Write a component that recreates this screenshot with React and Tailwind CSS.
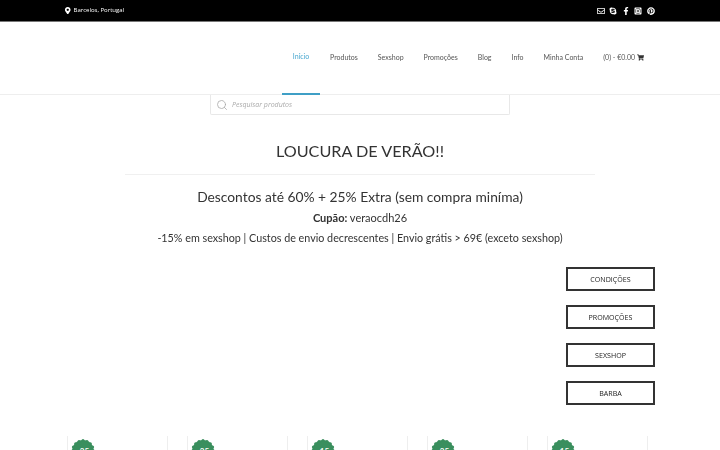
import React from "react";
import { FaMapMarkerAlt, FaRegEnvelope, FaSkype, FaFacebookF, FaInstagramSquare, FaPinterest, FaShoppingCart } from "react-icons/fa";
import { Search } from "lucide-react";

const links = ["Produtos", "Sexshop", "Promoções", "Blog", "Info", "Minha Conta"];
const buttons = ["CONDIÇÕES", "PROMOÇÕES", "SEXSHOP", "BARBA"];
const badges = ["-25", "-25", "-15", "-25", "-15"];

function Badge({ text }) {
  return (
    <div className="relative w-6 h-6 ml-[3px]">
      <svg viewBox="0 0 24 24" className="w-6 h-6 text-[#3a8f5e]" fill="currentColor">
        <circle cx="12" cy="12" r="11" />
        {Array.from({ length: 16 }).map((_, i) => {
          const a = (i / 16) * Math.PI * 2;
          return <circle key={i} cx={12 + Math.cos(a) * 10.4} cy={12 + Math.sin(a) * 10.4} r="1.5" />;
        })}
      </svg>
      <span className="absolute inset-x-0 top-[7px] text-center text-[8px] leading-[10px] font-bold text-white">{text}</span>
    </div>
  );
}

export default function App() {
  return (
    <div className="w-[720px] h-[450px] overflow-hidden bg-white font-['Lato','Liberation_Sans',sans-serif] text-[#333]">
      <div className="h-[22px] bg-black border-b border-[#777] flex items-center justify-between pl-[64px] pr-[65px] text-white">
        <div className="flex items-center gap-[2px] font-['Open_Sans',sans-serif] text-[6px] will-change-transform">
          <FaMapMarkerAlt className="text-[7.5px]" />
          <span>Barcelos, Portugal</span>
        </div>
        <div className="flex items-center gap-[4.6px] text-[8px]">
          <FaRegEnvelope />
          <FaSkype />
          <FaFacebookF />
          <FaInstagramSquare />
          <FaPinterest />
        </div>
      </div>

      <div className="h-[73px] border-b border-[#eee] flex justify-end pr-[76px] text-[7px] text-[#555]">
        <div className="flex will-change-transform">
          <div className="w-[38px] pb-[2px] flex items-center justify-center text-[#4aa8d0] -mb-px border-b-2 border-[#3f9fc6]">Início</div>
          <div className="flex items-center gap-[20px] ml-[10px] pb-[2px]">
            {links.map((l) => (
              <span key={l}>{l}</span>
            ))}
            <span className="flex items-center gap-[2px]">
              (0) - €0.00 <FaShoppingCart className="text-[7px] text-[#333]" />
            </span>
          </div>
        </div>
      </div>

      <div className="flex justify-center">
        <div className="w-[300px] h-[20px] ml-[-1px] bg-white border-x border-b border-[#e8e8e8] rounded-b-[2px] flex items-center pl-[5px] gap-[4px]">
          <Search className="w-[12px] h-[12px] text-[#aaa]" strokeWidth={1.6} />
          <span className="pt-[1px] font-['Open_Sans',sans-serif] italic text-[7px] text-[#aaa] will-change-transform">Pesquisar produtos</span>
        </div>
      </div>

      <div className="will-change-transform">
        <h1 className="mt-[24px] text-center text-[16.2px] leading-[24px] text-[#333]">LOUCURA DE VERÃO!!</h1>
        <div className="mx-[125px] mt-[11px] border-t border-[#f0f0f0]" />
        <h2 className="mt-[12px] text-center text-[13.8px] leading-[20px] text-[#333]">Descontos até 60% + 25% Extra (sem compra miníma)</h2>
        <p className="mt-[1px] text-center text-[11px] leading-[20px] text-[#333]"><b>Cupão:</b> veraocdh26</p>
        <p className="text-center text-[10.75px] leading-[20px] text-[#333]">-15% em sexshop | Custos de envio decrescentes | Envio grátis &gt; 69€ (exceto sexshop)</p>
      </div>

      <div className="mt-[19px] flex flex-col items-end gap-[14px] pr-[65px] will-change-transform">
        {buttons.map((b) => (
          <div key={b} className="w-[89px] h-[24px] border-2 border-[#333] flex items-center justify-center font-['Open_Sans',sans-serif] text-[7.1px] text-[#222]">
            {b}
          </div>
        ))}
      </div>

      <div className="mt-[31px] pl-[67px] flex gap-[19px]">
        {badges.map((t, i) => (
          <div key={i} className="w-[101px] h-[40px] border-x border-[#eee] pt-[3px]">
            <Badge text={t} />
          </div>
        ))}
      </div>
    </div>
  );
}
